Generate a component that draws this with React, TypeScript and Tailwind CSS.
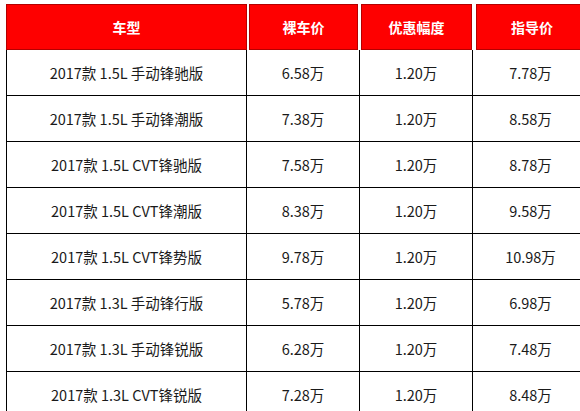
const rows = [
  ["2017款 1.5L 手动锋驰版", "6.58万", "1.20万", "7.78万"],
  ["2017款 1.5L 手动锋潮版", "7.38万", "1.20万", "8.58万"],
  ["2017款 1.5L CVT锋驰版", "7.58万", "1.20万", "8.78万"],
  ["2017款 1.5L CVT锋潮版", "8.38万", "1.20万", "9.58万"],
  ["2017款 1.5L CVT锋势版", "9.78万", "1.20万", "10.98万"],
  ["2017款 1.3L 手动锋行版", "5.78万", "1.20万", "6.98万"],
  ["2017款 1.3L 手动锋锐版", "6.28万", "1.20万", "7.48万"],
  ["2017款 1.3L CVT锋锐版", "7.28万", "1.20万", "8.48万"],
];

const headers = [
  { label: "车型", cls: "ml-0 -mr-px" },
  { label: "裸车价", cls: "ml-[3px] mr-px" },
  { label: "优惠幅度", cls: "ml-[2px]" },
  { label: "指导价", cls: "ml-[4px]" },
];

export default function App() {
  return (
    <div
      className="w-[580px] h-[411px] overflow-hidden bg-white pl-[6px] pt-[4px]"
      style={{ fontFamily: '"Noto Sans CJK SC", "Noto Sans", sans-serif' }}
    >
      <div className="w-[582px]">
        {/* Header */}
        <div className="grid grid-cols-[240px_113px_113px_116px] h-[46px]">
          {headers.map((h) => (
            <div
              key={h.label}
              className={`${h.cls} flex items-center justify-center bg-[#fe0000] border border-[#b40000] text-white font-bold text-[14px]`}
            >
              {h.label}
            </div>
          ))}
        </div>

        {/* Body */}
        {rows.map((r) => (
          <div
            key={r[0]}
            className="grid grid-cols-[240px_113px_113px_116px] h-[46px] border-b border-black"
          >
            {r.map((c, i) => (
              <div
                key={i}
                className="flex items-center justify-center pt-px border-l border-black text-[14.5px] text-[#1a1a1a] whitespace-nowrap"
              >
                {c}
              </div>
            ))}
          </div>
        ))}
      </div>
    </div>
  );
}
